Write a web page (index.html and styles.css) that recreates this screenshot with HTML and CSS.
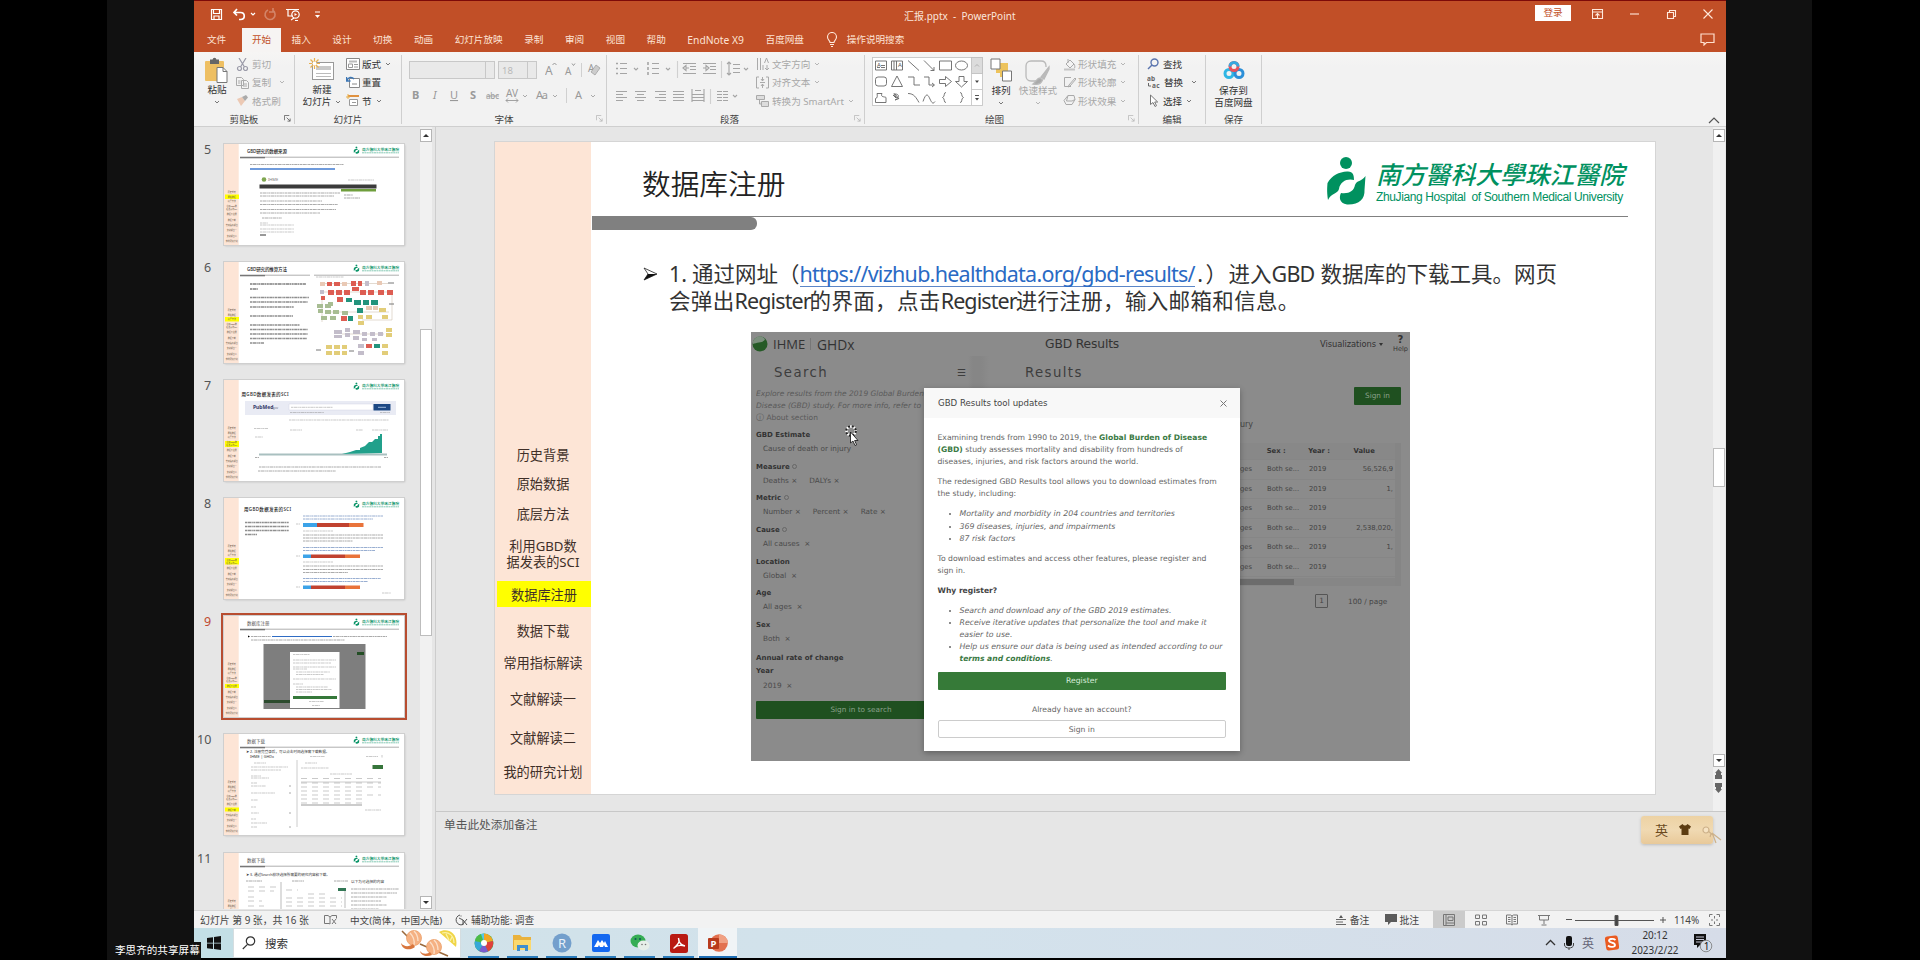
FILE: index.html
```html
<!DOCTYPE html>
<html>
<head>
<meta charset="utf-8">
<title>汇报.pptx - PowerPoint</title>
<link rel="stylesheet" href="styles.css">
</head>
<body>
<svg class="defs" width="0" height="0">
  <defs>
    <symbol id="chev" viewBox="0 0 6 6"><path d="M1 2l2 2 2-2" fill="none" stroke="currentColor" stroke-width="1"/></symbol>
    <symbol id="launch" viewBox="0 0 8 8"><path d="M.5 6V.5H6M3 3l4 4M7 4v3H4" fill="none" stroke="currentColor" stroke-width="1"/></symbol>
    <symbol id="logo" viewBox="0 0 39 48"><circle cx="19" cy="6" r="6"/><path d="M1 43C0 36 0 32 .5 26 5 18 12 15 20 14.500c6-.5 7 3.500 7 8.500-6-2-14 1-15 9-1 5-8 4-11 11z"/><path d="M38.500 19C34 25 30 23 28 28c-1 6-6 9-14 8-2 4-2 10 6 11.500 12 .5 18-5.500 17.500-14.500z"/></symbol>
    <symbol id="base" viewBox="0 0 180 101">
      <rect width="180" height="101" fill="#fff"/><rect width="14.7" height="101" fill="#fde5d6"/>
      <g fill="#0a9468"><use href="#logo" x="129.5" y="2.2" width="6" height="8"/><text x="138" y="7" class="t-logo" textLength="37">南方醫科大學珠江醫院</text><path d="M138 8.8h37" stroke="#0a9468" stroke-width=".7" stroke-dasharray="2 .4" opacity=".7"/></g>
    </symbol>
    <symbol id="rule" viewBox="0 0 180 101"><path d="M16 13.2h159" stroke="#777" stroke-width=".6"/><path d="M16 13.6h25" stroke="#777" stroke-width="1.4"/></symbol>
    <symbol id="labels" viewBox="0 0 180 101"><g class="t-lab" text-anchor="middle"><text x="7.7" y="49">历史背景</text><text x="7.7" y="53.5">原始数据</text><text x="7.7" y="58">底层方法</text><text x="7.7" y="63.3">利用GBD数</text><text x="7.7" y="66">据发表的SCI</text><text x="7.7" y="71.2">数据库注册</text><text x="7.7" y="76.8">数据下载</text><text x="7.7" y="81.7">常用指标解读</text><text x="7.7" y="87.3">文献解读一</text><text x="7.7" y="93.3">文献解读二</text><text x="7.7" y="98.4">我的研究计划</text></g></symbol>
  </defs>
</svg>

<div class="stage">
  <div class="side left"><span class="share">李思齐的共享屏幕</span></div>
  <div class="window">

    <header class="titlebar">
      <svg class="qat" width="130" height="20" viewBox="0 0 130 20" fill="none" stroke="#fff" stroke-width="1.2">
        <path d="M2.500 3.500h10v10h-10zM4.500 3.500v4h6v-4M5 13.500v-3.500h5v3.500"/>
        <path d="M28 3l-3 3.500 3 3M25.500 6.500h6c5 0 5 7 0 7h-1.500" stroke-width="1.700"/>
        <path d="M42 7l2 2 2-2"/>
        <g opacity=".3"><path d="M64 4.500a5 5 0 1 1-5-.5M64 2v4h-4" stroke-width="1.600"/></g>
        <path d="M77 3.500h13M79 4v6h5M82 14l3-2M86 14.500h3M82 4v-1"/><circle cx="86.500" cy="8.500" r="3.700"/><path d="M85.500 7v3l2.500-1.500z" fill="#fff" stroke="none"/>
        <path d="M106 6h5" stroke-width="1"/><path d="M106 9h5l-2.500 3z" fill="#fff" stroke="none"/>
      </svg>
      <span class="doc">汇报.pptx&nbsp; -&nbsp; PowerPoint</span>
      <span class="login">登录</span>
      <svg class="winbtns" width="124" height="16" viewBox="0 0 124 16" fill="none" stroke="#ffe9dc" stroke-width="1.100">
        <path d="M.5 3.500h10v9H.5zM.5 6h10M5.500 12V7.500M3.500 9.500l2-2 2 2"/><path d="M38 8h9"/><path d="M75.500 6.500h6v6h-6zM77.500 6V4.500h6v6H82"/><path d="M111.500 3.500l9 9M120.500 3.500l-9 9"/>
      </svg>
    </header>

    <nav class="tabs">
      <span class="tab file">文件</span><span class="tab on">开始</span><span class="tab">插入</span><span class="tab">设计</span><span class="tab">切换</span><span class="tab">动画</span><span class="tab">幻灯片放映</span><span class="tab">录制</span><span class="tab">审阅</span><span class="tab">视图</span><span class="tab">帮助</span><span class="tab lat">EndNote X9</span><span class="tab">百度网盘</span>
      <svg class="bulb" width="12" height="16" viewBox="0 0 12 16" fill="none" stroke="#ffe9dc" stroke-width="1.100"><path d="M4 10.500C4 8.500 1.500 8 1.500 5a4.300 4.300 0 0 1 9 0c0 3-2.500 3.500-2.500 5.500zM4 12.500h4M5 14.500h2"/></svg>
      <span class="tell">操作说明搜索</span>
      <svg class="comment" width="15" height="13" viewBox="0 0 15 13" fill="none" stroke="#ffe0cf" stroke-width="1.200"><path d="M1 1h13v8.500H6.500L4 12V9.500H1z"/></svg>
    </nav>

    <section class="ribbon">
      <div class="group g1">
        <div class="body">
          <div class="big paste">
            <svg width="26" height="27" viewBox="0 0 26 27"><rect x="1" y="4" width="19" height="20" rx="1" fill="#eebf62"/><rect x="6" y="2.500" width="9" height="4.500" fill="#666"/><circle cx="10.500" cy="2.500" r="1.800" fill="#666"/><path d="M13 10.500h6l4 4v11H13z" fill="#fff" stroke="#777"/><path d="M19 10.500v4h4" fill="none" stroke="#777"/></svg>
            <span>粘贴</span><svg class="cv"><use href="#chev"/></svg>
          </div>
          <div class="rows dim">
            <div><svg width="13" height="13" viewBox="0 0 13 13" fill="none" stroke="#9a9aa8" stroke-width="1.200"><path d="M3 0l5.500 9M10 0L4.500 9"/><circle cx="3.500" cy="10.500" r="2"/><circle cx="9.500" cy="10.500" r="2"/></svg>剪切</div>
            <div><svg width="13" height="13" viewBox="0 0 13 13" fill="#f3f3f3" stroke="#aaa"><path d="M.5 1.500h5l2 2v6h-7zM5.500 4.500h5l2 2v6h-7zM2 5h2.500M2 7h2.500M7 8h4M7 10h4"/></svg>复制<svg class="cv far"><use href="#chev"/></svg></div>
            <div><svg width="13" height="13" viewBox="0 0 13 13"><path d="M1 5l5-2 3 4-4 5z" fill="#ecc9b4"/><path d="M6 3l3 4 3-3.500L10 1z" fill="#aaa"/></svg>格式刷</div>
          </div>
        </div>
        <div class="cap">剪贴板<svg class="la dark"><use href="#launch"/></svg></div>
      </div>
      <div class="group g2">
        <div class="body">
          <div class="big newslide">
            <svg width="26" height="26" viewBox="0 0 26 26"><rect x="3.500" y="4.500" width="21" height="17" fill="#fff" stroke="#999"/><path d="M7 8h15v4H7z" fill="#c9c9c9"/><path d="M7 15.500h15M7 18.500h15" stroke="#bbb"/><path d="M5.500 0v11M0 5.500h11M1.500 1.500l8 8M9.500 1.500l-8 8" stroke="#e8b04f" stroke-width="1.200"/><circle cx="5.500" cy="5.500" r="2" fill="#fff"/></svg>
            <span>新建</span><span class="l2">幻灯片<svg class="cv"><use href="#chev"/></svg></span>
          </div>
          <div class="rows">
            <div><svg width="14" height="12" viewBox="0 0 14 12" fill="#fff" stroke="#888"><path d="M.5.5h13v11H.5z"/><path d="M3 3.500h8" stroke="#bbb" stroke-width="2"/><path d="M2.500 6h4v3.500h-4zM8 6.500h4M8 9h4" stroke="#999"/></svg>版式<svg class="cv"><use href="#chev"/></svg></div>
            <div><svg width="14" height="12" viewBox="0 0 14 12" fill="#fff" stroke="#888"><path d="M3.500 2.500h10v9h-10zM6 8h5"/><path d="M1 4.500C2 1 6 .5 8 3M.5 1v4h4" fill="none" stroke="#3d77b5" stroke-width="1.400"/></svg>重置</div>
            <div><svg width="14" height="13" viewBox="0 0 14 13" fill="#fff" stroke="#999"><path d="M3.500 5.500h8v6h-8zM6 8.500h4"/><path d="M2 2h11" stroke="#e0913f" stroke-width="2"/><path d="M2 0v5M0 3h4" stroke="#e8b04f"/></svg>节<svg class="cv"><use href="#chev"/></svg></div>
          </div>
        </div>
        <div class="cap">幻灯片</div>
      </div>
      <div class="group g3 dim">
        <div class="stack">
          <div class="line"><span class="box fbox"><i></i></span><span class="box sbox">18<i></i></span>
            <svg width="56" height="18" viewBox="0 0 56 18"><text x="0" y="14" class="ic" font-size="12">A</text><path d="M7.500 4l2-2 2 2" fill="none" stroke="#999"/><text x="20" y="14" class="ic" font-size="10">A</text><path d="M27 2.500l1.500 2L30 2.500" fill="none" stroke="#999"/><path d="M36.500 2v14" stroke="#d0d0d0"/><text x="43" y="11" class="ic" font-size="10">A</text><path d="M46 11l5-7 4 3-5 7z" fill="#ccc" stroke="#999" stroke-width=".7"/></svg>
          </div>
          <svg class="fmt" width="190" height="18" viewBox="0 0 190 18"><g class="ic" font-size="11"><text x="5" y="13" font-weight="700">B</text><text x="26" y="13" font-style="italic" class="it-i">I</text><text x="43" y="13" text-decoration="underline">U</text><text x="63" y="13" font-weight="700">S</text><text x="79" y="13" font-size="8" text-decoration="line-through" textLength="13">abc</text><text x="99" y="11" font-size="10" textLength="12">AV</text><text x="129" y="13" textLength="12">Aa</text><text x="168" y="13">A</text></g><path d="M99 14.500h12M101 12.500l-2 2 2 2M109 12.500l2 2-2 2" fill="none" stroke="#999" stroke-width=".9"/><path d="M116 9l2 2 2-2M146 9l2 2 2-2M184 9l2 2 2-2" fill="none" stroke="#aaa"/><path d="M159.500 2v15" stroke="#d0d0d0"/></svg>
        </div>
        <div class="cap">字体<svg class="la"><use href="#launch"/></svg></div>
      </div>
      <div class="group g4 dim">
        <div class="body">
          <svg class="para" width="136" height="48" viewBox="0 0 136 48" fill="none" stroke="#a5a5a5" stroke-width="1.100">
            <path d="M4 7.500h7M4 12.500h7M4 17.500h7M36 7.500h7M36 12.500h7M36 17.500h7"/><path d="M0 7.500h2M0 12.500h2M0 17.500h2M32 6v3M32 11v3M32 16v3" stroke-width="1.600"/>
            <path d="M18 12l2 2 2-2M50 12l2 2 2-2M128 12l2 2 2-2"/><path d="M61.500 5v17M105.500 5v17M94.500 33v15" stroke="#d0d0d0"/>
            <path d="M67 7.500h13M74 10.500h6M74 13.500h6M67 17.500h13M67 12l3-2.500v5zM70 12h3M87 7.500h13M94 10.500h6M94 13.500h6M87 17.500h13M93 12l-3-2.500v5zM87 12h3"/>
            <path d="M113 6v13M111 8l2-2 2 2M111 17l2 2 2-2M117 8.500h7M117 12.500h7M117 16.500h7"/>
            <path d="M0 35.500h11M0 38.500h7M0 41.500h11M0 44.500h7M19 35.500h11M21 38.500h7M19 41.500h11M21 44.500h7M39 35.500h11M43 38.500h7M39 41.500h11M43 44.500h7M57 35.500h11M57 38.500h11M57 41.500h11M57 44.500h11M76 38.500h12M76 41.500h12M76 44.500h12M76 33v13M88 33v13M79 34.500h6M101 35.500h5M107 35.500h5M101 38.500h5M107 38.500h5M101 41.500h5M107 41.500h5M101 44.500h5M107 44.500h5M117 39l2 2 2-2"/>
          </svg>
          <div class="rows wide">
            <div><svg width="13" height="14" viewBox="0 0 13 14" fill="none" stroke="#aaa"><path d="M1.500 1v12M4.500 1v12M11 8v5M9 11l2 2 2-2M8.500 6l2-5 2 5M7 13V8"/></svg>文字方向<svg class="cv"><use href="#chev"/></svg></div>
            <div><svg width="13" height="13" viewBox="0 0 13 13" fill="none" stroke="#aaa"><path d="M3 1H.5v11H3M10 1h2.500v11H10M4 6.500h5M6.500 1v4M5 3l1.500 2L8 3M6.500 12V8M5 10l1.500-2L8 10"/></svg>对齐文本<svg class="cv"><use href="#chev"/></svg></div>
            <div><svg width="13" height="13" viewBox="0 0 13 13" fill="#ddd" stroke="#aaa"><path d="M.5 1.500h8v4h-8zM5.500 7.500h7v5h-7zM3.500 6v4h2"/></svg>转换为 SmartArt<svg class="cv"><use href="#chev"/></svg></div>
          </div>
        </div>
        <div class="cap">段落<svg class="la"><use href="#launch"/></svg></div>
      </div>
      <div class="group g5">
        <div class="body">
          <svg class="shapes" width="111" height="49" viewBox="0 0 111 49" fill="none" stroke="#666" stroke-width=".9">
            <rect x=".5" y=".5" width="110" height="48" fill="#fff" stroke="#c6c6c6"/><rect x="99.500" y=".5" width="11" height="16" fill="#dcdcdc" stroke="#c0c0c0"/><path d="M99.500 17v31M99.500 32.500h11" stroke="#c6c6c6"/>
            <path d="M103 9.500l2-2 2 2" stroke="#aaa"/><path d="M103 23.500h4l-2 2.500zM103 41h4l-2 2.500z" fill="#444" stroke="none"/><path d="M103 38.500h4" stroke="#444"/>
            <path d="M3.500 4h11v9h-11zM9 8.500h4M9 10.500h4M5 10.500h3M19.500 4h11v9h-11zM22 4v9M24.500 4v9M36 3.500l11 10M52 3.500l10 10M62 10v3.500h-3.500M67.500 4h12v9h-12z"/><text x="5" y="9.500" font-size="6" fill="#555" stroke="none">A</text><text x="26" y="10" font-size="6" fill="#555" stroke="none">A</text><ellipse cx="89.500" cy="8.500" rx="6" ry="4.500"/>
            <rect x="3.500" y="20" width="11" height="9" rx="2.500"/><path d="M25 19l5.500 10.500h-11zM36 20h6v8h6M52 20h5v8h5M60 26l2.500 2-2.500 2M67.500 22.500h6V19.500l6 5-6 5v-3h-6zM87 19.500h5v5h3.500l-6 5.500-6-5.500H87z"/>
            <path d="M5 36.500h5c-2 4 3 3 4 4v5H3.500v-4c2 0 2-3 1.500-5zM22 36l2 5-3-3 6 4-4-5c5 0 4 4 0 6l3-1M36 36.500c6 0 8 4 11 9M51 44.500c6-18 7 8 12 0M74 35.500c-3 0-.5 4-3.500 5 3 1 .5 5 3.500 5M88 35.500c3 0 .5 4 3.500 5-3 1-.5 5-3.500 5"/>
          </svg>
          <div class="big arrange"><svg width="23" height="24" viewBox="0 0 23 24"><path d="M6 5h12v14H6z" fill="#edc35c"/><path d="M1 1h9v10H1zM12.500 13h9v10h-9z" fill="#fff" stroke="#777"/><path d="M4 15h6v5H4z" fill="#f3f3f3"/></svg><span>排列</span><svg class="cv"><use href="#chev"/></svg></div>
          <div class="big quick dim"><svg width="26" height="26" viewBox="0 0 26 26" fill="none" stroke="#b9b9b9" stroke-width="1.300"><path d="M12 21H6c-3 0-5-2-5-5V6c0-3 2-5 5-5h10c3 0 5 2 5 5v1"/><path d="M24 7l-8 10 3 2 5-10z" fill="#bbb"/><path d="M15 18c-3 0-4 4-7 6 4 1 8 0 9.500-4z" fill="#aaa"/></svg><span>快速样式</span><svg class="cv"><use href="#chev"/></svg></div>
          <div class="rows dim">
            <div><svg width="13" height="13" viewBox="0 0 13 13" fill="none" stroke="#aaa"><path d="M3 6l4-4 4 4-4 4zM5 5V1M11 6c1 2 1 3 .5 4"/><path d="M1 11.500h11" stroke-width="2" stroke="#c5c5c5"/></svg>形状填充<svg class="cv"><use href="#chev"/></svg></div>
            <div><svg width="13" height="13" viewBox="0 0 13 13" fill="none" stroke="#aaa"><path d="M8 1.500H1.500v9H8M12 2L6 9l-1 2 2-1 6-7z"/></svg>形状轮廓<svg class="cv"><use href="#chev"/></svg></div>
            <div><svg width="13" height="13" viewBox="0 0 13 13" fill="none" stroke="#aaa"><path d="M5 1.500h6l1 4-3 5H3l-2-4z"/><path d="M5 1.500L3.500 7H9l3-1.500" /></svg>形状效果<svg class="cv"><use href="#chev"/></svg></div>
          </div>
        </div>
        <div class="cap">绘图<svg class="la"><use href="#launch"/></svg></div>
      </div>
      <div class="group g6">
        <div class="body"><div class="rows">
          <div><svg width="13" height="12" viewBox="0 0 13 12" fill="none" stroke="#5a74ae" stroke-width="1.400"><circle cx="7.500" cy="4.500" r="3.500"/><path d="M5 7l-4 4"/></svg>查找</div>
          <div><svg width="14" height="16" viewBox="0 0 14 16"><g font-size="6.500" fill="#666" font-weight="700"><text x="0" y="7" textLength="8">ab</text><text x="5" y="13.500" textLength="7.500">ac</text></g><path d="M1.500 9v3h2.500" fill="none" stroke="#666"/></svg>替换<svg class="cv far6"><use href="#chev"/></svg></div>
          <div><svg width="13" height="13" viewBox="0 0 13 13" fill="#fff" stroke="#777"><path d="M3.500 1v9.500l2.500-2 2 4 1.500-.8-1.800-3.700h3z"/></svg>选择<svg class="cv"><use href="#chev"/></svg></div>
        </div></div>
        <div class="cap">编辑</div>
      </div>
      <div class="group g7">
        <div class="body"><div class="big save"><svg width="22" height="20" viewBox="0 0 22 20" fill="none" stroke-width="3"><circle cx="6" cy="13.500" r="4" stroke="#2fb6e4"/><circle cx="16" cy="13.500" r="4" stroke="#2b8fd8"/><circle cx="11" cy="6.500" r="4" stroke="#e8525c"/><path d="M7 6.500a4 4 0 0 1 8 0" stroke="#35a9e0"/></svg><span>保存到</span><span class="l2">百度网盘</span></div></div>
        <div class="cap">保存</div>
      </div>
      <svg class="collapse" width="12" height="8" viewBox="0 0 12 8" fill="none" stroke="#555" stroke-width="1.200"><path d="M1 7l5-5 5 5"/></svg>
    </section>

    <main class="work">
      <aside class="thumbs">
        <div class="trow"><b>5</b><svg class="thumb" viewBox="0 0 180 101"><use href="#base"/><use href="#rule"/><rect x="1" y="50.500" width="14" height="4.500" fill="#ff0"/><use href="#labels"/>
          <text x="23" y="8.700" class="t-h" textLength="40">GBD研究的数据来源</text><path d="M26 20.500h94" class="tx"/><path d="M26 25h85" stroke="#3f7ad0" stroke-width="1.600"/>
          <circle cx="40" cy="35.500" r="2.300" fill="#7fa650"/><text x="44" y="37" font-size="4" fill="#777">IHME</text><path d="M124 36h26" class="tx l"/><path d="M35.500 40.500h117v4h-117z" fill="#3b3b3b"/><path d="M117 45h35v2.500h-35z" fill="#6f9e3c"/>
          <path d="M36 49h80M36 52h74M36 57h62M36 60.500h78M36 65.500h76M36 69h60M38 74h20M120 51h9M120 54h16" class="tx"/><path d="M36 79h8M36 81h34M36 85h34M36 88h34" class="tx l"/><path d="M36 91h6" stroke="#333"/></svg></div>
        <div class="trow"><b>6</b><svg class="thumb" viewBox="0 0 180 101"><use href="#base"/><use href="#rule"/><path d="M86 12h4v3h-4z" fill="#fff"/><rect x="1" y="55" width="14" height="4.500" fill="#ff0"/><use href="#labels"/>
          <text x="23" y="8.700" class="t-h" textLength="40">GBD研究的推算方法</text>
          <path d="M26 22h56M26 27h8" class="tx k"/><path d="M26 35.500h59M26 40h58M26 45h44M26 54h43M26 63h50M26 67.500h58M26 72h58M26 76.500h57M26 81h14" class="tx k l"/>
          <path d="M92 15h28" class="tx l"/><path d="M96 21.500h68M100 30h68v28h-30M98 36v24M105 50h60M118 72h42" stroke="#c7b5a0" stroke-width=".5" fill="none"/>
          <path d="M96 20h5v4h-5zM118 20h5v4h-5zM153 19h5v4h-5zM142 44h6v4h-6zM149 44h5v4h-5z" fill="#e9c9b5"/><path d="M103 20h5v4h-5zM110 20h6v4h-6zM127 19h5v5h-5zM134 19h4v5h-4zM104 28h6v5h-6zM112 28h6v5h-6zM120 28h6v5h-6zM128 25h7v4h-7zM136 28h6v5h-6zM144 28h6v5h-6zM154 28h6v5h-6zM163 28h6v5h-6zM97 34h4v4h-4zM113 35h6v5h-6zM117 54h6v5h-6zM142 82h6v4h-6z" fill="#dd5d52"/><path d="M122 36h6v4h-6zM130 38h7v5h-7zM139 38h6v5h-6zM147 38h7v5h-7zM133 46h6v5h-6zM124 54h5v5h-5zM150 82h6v4h-6z" fill="#23937c"/><path d="M93 42h6v4h-6zM101 42h6v4h-6zM94 47h5v4h-5zM101 48h6v4h-6zM109 48h6v4h-6zM118 49h6v4h-6zM97 54h6v4h-6zM106 54h6v4h-6zM104 40h5v4h-5z" fill="#a8bd93"/><path d="M134 53h5v4h-5zM142 53h6v4h-6zM155 46h7v4h-7zM158 53h6v4h-6zM134 59h6v4h-6zM162 66h6v4h-6zM162 71h6v4h-6zM102 83h6v4h-6zM110 83h6v4h-6zM118 83h5v4h-5zM102 89h6v4h-6zM110 89h6v4h-6zM118 89h5v4h-5zM158 82h6v4h-6zM158 89h6v4h-6z" fill="#e2cd79"/><path d="M110 68h8v4h-8zM110 73h8v3h-8zM121 66h5v4h-5zM121 71h5v4h-5zM129 68h7v4h-7zM129 74h6v4h-6zM138 70h5v4h-5zM146 70h5v4h-5zM154 70h5v4h-5zM138 76h5v3h-5zM148 76h5v3h-5zM96 28h4v4h-4zM141 19h4v5h-4zM134 82h6v4h-6zM134 89h6v4h-6z" fill="#c3bdca"/><path d="M92 88h5M164 21h6M165 42h5M125 89h5" stroke="#777"/></svg></div>
        <div class="trow"><b>7</b><svg class="thumb" viewBox="0 0 180 101"><use href="#base"/><rect x="1" y="61" width="14" height="6" fill="#ff0"/><use href="#labels"/>
          <text x="17.500" y="15.500" class="t-h" textLength="47">用GBD数据发表的SCI</text><path d="M21 21h151v14H21z" fill="#e9ebf4"/><text x="29" y="29" font-size="5" font-weight="700" fill="#333a66">PubMed</text><text x="48" y="29" font-size="3" fill="#667">.gov</text><path d="M65 24h84v6H65z" fill="#fff" stroke="#ccd" stroke-width=".4"/><path d="M149.500 24h17v6.500h-17z" fill="#1c4884"/><path d="M154 27.300h8" stroke="#9db8dc"/><path d="M67 27.300h42M66 32.500h34M156 32.500h10" class="tx l"/><path d="M65 40h100M30 48.500h14M66 50h12M132 50h7M148 50h16" class="tx l" stroke-dasharray="4 3"/><path d="M31 57h8" class="tx l"/>
          <path d="M35 74.500h128" stroke="#a9c0c0" stroke-width="2"/><path d="M118 74l8-2 6-2h4v-2l5-2 4-4h3l3-3h3v-3h2v-2h2v19z" fill="#21a08b"/><path d="M31 77.500h4M160 77.500h4" class="tx"/><path d="M35 87h122M34 91h78" class="tx"/></svg></div>
        <div class="trow"><b>8</b><svg class="thumb" viewBox="0 0 180 101"><use href="#base"/><rect x="1" y="60" width="14" height="6.500" fill="#ff0"/><use href="#labels"/>
          <text x="20" y="12.500" class="t-h" textLength="47">用GBD数据发表的SCI</text><path d="M21 24.500h44M21 28.500h44M21 32.500h44M21 36.500h12" class="tx k l"/>
          <path d="M79 18h80M79 21h70M79 49.500h80M79 52.500h72M79 80.500h78M79 83.500h65" class="tx b"/><path d="M79 37h80M79 40h80M79 43h50M79 68h80M79 71.500h80M79 74.500h45" class="tx"/>
          <path d="M79 25h14v4H79zM79 56.500h8v3.500h-8zM79 87.500h8v3.500h-8z" fill="#3ca3e8"/><path d="M93 25h32v4H93zM87 56.500h34v3.500H87zM87 87.500h34v3.500H87z" fill="#c1422f"/><path d="M125 25h14.500v4H125zM121 56.500h15v3.500h-15zM121 87.500h15v3.500h-15z" fill="#e9733a"/><path d="M79 33h30M79 64h30M72 26h4M72 58h4M72 89h4M158 95h9" class="tx l"/></svg></div>
        <div class="trow sel"><b>9</b><svg class="thumb" viewBox="0 0 180 101"><use href="#base"/><use href="#rule"/><rect x="1" y="68" width="14" height="4" fill="#ff0"/><use href="#labels"/>
          <text x="23" y="8.700" class="t-h n">数据库注册</text><path d="M27 20.500h20M109 20.500h54M27 24h94" class="tx"/><path d="M48 20.500h60" stroke="#2f6cc4" stroke-width="1"/><path d="M24 19.500l2 1-2 1z"/>
          <path d="M39.500 28h102v65h-102z" fill="#7e7e7e"/><path d="M40 84h27v3H40z" fill="#2b4a2d"/><path d="M133 36h7v3h-7z" fill="#234e25"/><path d="M66 36h49.500v56H66z" fill="#fff"/><path d="M69 38.500h17M69 44h43M69 47h38M69 51h43M69 53h14M72 56h34M72 58.500h28M69 63h43M69 68h10M72 71h32M72 73.500h36M72 76h16M85 85.500h15M88 89.500h8" class="tx l"/><path d="M69 80h44v3H69z" fill="#35783a"/></svg></div>
        <div class="trow"><b>10</b><svg class="thumb" viewBox="0 0 180 101"><use href="#base"/><use href="#rule"/><rect x="1" y="73.500" width="14" height="4" fill="#ff0"/><use href="#labels"/>
          <text x="23" y="8.700" class="t-h n">数据下载</text><text x="22" y="18.500" font-size="3.600" fill="#333">➤ 2. 注册完登录后，可以点击时间选择需下载数据。</text><text x="26" y="24" font-size="3.800" fill="#333">IHME | GHDx</text><path d="M86 22.500h15M142 22.500h12M158 21v3" class="tx l"/><path d="M73 26v67M77 48h80" stroke="#ccc"/>
          <path d="M30 29h12M27 33h37M27 36h30M27 42h10M27 44h18M27 49h6M27 52h15M27 59h24M27 66h7M27 73h5M27 79h8M27 85h5M27 89h16M27 93h6M77 34h28M81 29h12M106 40h22" class="tx l"/><path d="M148.500 31h10.500v4h-10.500z" fill="#36753b"/><path d="M77 44.500h80M77 49h80M77 53h80M77 57h66M77 61h80M77 65h66M77 69h66" class="tx l g"/><path d="M77 71h61" stroke="#999" stroke-width="1"/><path d="M141 76h16" class="tx l"/><path d="M65 52h2M65 59h2M65 79h2M65 93h2" class="tx"/></svg></div>
        <div class="trow"><b>11</b><svg class="thumb" viewBox="0 0 180 101"><use href="#base"/><use href="#rule"/><use href="#labels"/>
          <text x="23" y="8.700" class="t-h n">数据下载</text><text x="22" y="22.500" font-size="3.600" fill="#333">➤ 3. 通过Search模块选择所需要的研究内容和下载。</text><path d="M22 28h16M68 28h12M110 28h14" class="tx"/><text x="127" y="30" font-size="3.700" fill="#333">以下为可选择的内容</text><path d="M57 29v29M121 35v20" stroke="#bbb"/><path d="M24 34h28M24 38h26M24 44h10M24 48h14M24 53h16M62 37h12M84 41h20M62 45h56M62 49h56M62 53h56M62 57h56" class="tx l g"/><path d="M114 35h8v3h-8z" fill="#375"/><path d="M127 36h48M127 40h46M127 44h36M127 48h30M127 52h36M127 56h28" class="tx"/></svg></div>
      </aside>
      <div class="scroll sleft"><i class="up"></i><i class="grip"></i><i class="down"></i></div>
      <div class="center">
        <div class="canvas">
          <article class="slide">
            <ul class="strip">
              <li>历史背景</li><li>原始数据</li><li>底层方法</li><li class="two">利用GBD数<br>据发表的SCI</li><li class="hl">数据库注册</li><li>数据下载</li><li>常用指标解读</li><li>文献解读一</li><li>文献解读二</li><li>我的研究计划</li>
            </ul>
            <div class="content">
              <div class="head">
                <h1>数据库注册</h1>
                <div class="brand"><svg width="39" height="48" fill="#00915f"><use href="#logo"/></svg><div><p class="cal">南方醫科大學珠江醫院</p><p class="eng">ZhuJiang Hospital&nbsp; of Southern Medical University</p></div></div>
              </div>
              <div class="bar"><i></i></div>
              <div class="text">
                <svg width="16" height="16" viewBox="0 0 16 16"><path d="M2 2l13 6-13 6 4-6z" fill="#fff" stroke="#222" stroke-width=".8"/><path d="M6 8h9L2 14z" fill="#111"/></svg>
                <div class="lines">
                  <p><span class="n1">1.</span><span>通过网址（</span><a>https://vizhub.healthdata.org/gbd-results/</a><span class="dot">.</span><span class="par">）</span><span>进入</span><span class="gbd">GBD</span><span>数据库的下载工具。网页</span></p>
                  <p class="p2"><span>会弹出</span><span class="reg">Register</span><span>的界面，点击</span><span class="reg">Register</span><span>进行注册，输入邮箱和信息。</span></p>
                </div>
              </div>
              <div class="shot">
                <div class="shot-top"><svg width="16" height="16" viewBox="0 0 16 16"><circle cx="8" cy="8" r="7.500" fill="#255a26"/><path d="M1 5C4-1 10-1 13 3c-1 4-8 3-12 5-.5-1 0-2 0-3z" fill="#7b8f7d"/></svg><span class="ihme">IHME</span><span class="ghdx">GHDx</span><span class="gr">GBD Results</span><span class="viz">Visualizations</span><i class="caret"></i><span class="help"><b>?</b>Help</span></div>
                <div class="shot-sub"><span class="s1">Search</span><span class="ham">☰</span><span class="s2">Results</span></div>
                <div class="shot-main">
                  <div class="form">
                    <p class="it w1">Explore results from the 2019 Global Burden</p><p class="it w2">Disease (GBD) study. For more info, refer to</p><p class="it w3">ⓘ About section</p>
                    <b class="f0">GBD Estimate</b><p class="v">Cause of death or injury</p>
                    <b>Measure <u></u></b><p class="v"><span>Deaths ×</span><span>DALYs ×</span></p>
                    <b>Metric <u></u></b><p class="v"><span>Number ×</span><span>Percent ×</span><span>Rate ×</span></p>
                    <b>Cause <u></u></b><p class="v">All causes&nbsp; ×</p>
                    <b>Location</b><p class="v">Global&nbsp; ×</p>
                    <b>Age</b><p class="v">All ages&nbsp; ×</p>
                    <b>Sex</b><p class="v">Both&nbsp; ×</p>
                    <b class="tight">Annual rate of change</b><b class="tight yr">Year</b><p class="v">2019&nbsp; ×</p>
                    <div class="sbtn">Sign in to search</div>
                  </div>
                  <div class="results">
                    <div class="sg">Sign in</div>
                    <p class="ury">ury</p>
                    <div class="tbl">
                      <div class="tr th"><span></span><span>Sex :</span><span>Year :</span><span>Value</span></div>
                      <div class="tr"><span>ges</span><span>Both se...</span><span>2019</span><span class="r">56,526,9</span></div>
                      <div class="tr"><span>ges</span><span>Both se...</span><span>2019</span><span class="r">1,</span></div>
                      <div class="tr"><span>ges</span><span>Both se...</span><span>2019</span><span class="r"></span></div>
                      <div class="tr"><span>ges</span><span>Both se...</span><span>2019</span><span class="r">2,538,020,</span></div>
                      <div class="tr"><span>ges</span><span>Both se...</span><span>2019</span><span class="r">1,</span></div>
                      <div class="tr"><span>ges</span><span>Both se...</span><span>2019</span><span class="r"></span></div>
                      <div class="hs"><i></i></div>
                    </div>
                    <div class="pg"><span class="one">1</span><span>100 / page</span></div>
                  </div>
                </div>
                <div class="modal">
                  <div class="mh"><span>GBD Results tool updates</span><svg width="7" height="7" viewBox="0 0 7 7" stroke="#777" stroke-width="1"><path d="M.5.500l6 6M6.500.500l-6 6"/></svg></div>
                  <div class="mb">
                    <p>Examining trends from 1990 to 2019, the <b class="g">Global Burden of Disease</b><br><b class="g">(GBD)</b> study assesses mortality and disability from hundreds of<br>diseases, injuries, and risk factors around the world.</p>
                    <p>The redesigned GBD Results tool allows you to download estimates from<br>the study, including:</p>
                    <ul><li>Mortality and morbidity in 204 countries and territories</li><li>369 diseases, injuries, and impairments</li><li>87 risk factors</li></ul>
                    <p>To download estimates and access other features, please register and<br>sign in.</p>
                    <p><b>Why register?</b></p>
                    <ul><li>Search and download any of the GBD 2019 estimates.</li><li>Receive iterative updates that personalize the tool and make it<br>easier to use.</li><li>Help us ensure our data is being used as intended according to our<br><b class="g">terms and conditions</b>.</li></ul>
                    <div class="rbtn">Register</div>
                    <p class="acc">Already have an account?</p>
                    <div class="ibtn">Sign in</div>
                  </div>
                </div>
                <svg class="cursor" width="16" height="22" viewBox="0 0 16 22"><circle cx="7" cy="6" r="4.500" fill="none" stroke="#fff" stroke-width="2.500"/><circle cx="7" cy="6" r="4.800" fill="none" stroke="#222" stroke-width="2.200" stroke-dasharray="2 1.800"/><path d="M6.500 7v11l2.500-2 2 4.500 1.600-.7-2-4.300H14z" fill="#fff" stroke="#111" stroke-width=".8"/></svg>
              </div>
            </div>
          </article>
          <div class="scroll sright"><i class="up"></i><i class="grip"></i><i class="down"></i>
            <svg width="11" height="26" viewBox="0 0 11 26" fill="#666"><path d="M5.500 1L9 5H8v2h1v4H2V7h1V5H2zM5.500 25L9 21H8v-2h1v-4H2v4h1v2H2z"/></svg></div>
        </div>
        <div class="notes">单击此处添加备注
          <div class="ime"><span>英</span><svg width="12" height="12" viewBox="0 0 12 12" fill="#5d3d12"><path d="M3.500 0Q6 3 8.500 0L12 2.500 10.500 5 9.500 4.500V11h-7V4.500L1.500 5 0 2.500z"/></svg><svg class="knot" width="20" height="18" viewBox="0 0 20 18" fill="none" stroke="#cdb189" stroke-width="1.200"><circle cx="4" cy="4" r="3" fill="#f6e3c3"/><path d="M6 5l5 4 3 8M10 7l9 7M9 8l-1 3"/></svg></div>
        </div>
      </div>
    </main>

    <footer class="status">
      <span class="st1">幻灯片 第 9 张，共 16 张</span>
      <svg class="book" width="13" height="10" viewBox="0 0 13 10" fill="none" stroke="#777"><path d="M6 9V2L4 .5H.5v8H5zM6 2l2-1.500h4.500v3M8 4l4 5M12 4L8 9"/></svg>
      <span class="st2">中文(简体，中国大陆)</span>
      <svg class="acc-i" width="13" height="12" viewBox="0 0 13 12" fill="none" stroke="#555"><path d="M5 1a5 5 0 1 0 3 9.500M4 4l4 2v5M6 1.500v1M8 6l4 5M12 5L7 11"/></svg>
      <span class="st3">辅助功能: 调查</span>
      <span class="grow"></span>
      <svg width="10" height="11" viewBox="0 0 10 11" fill="none" stroke="#666"><path d="M0 5.500h10M0 8h7M0 10.500h10"/><path d="M3 4h4L5 1z" fill="#555" stroke="none"/></svg><span class="s4">备注</span>
      <svg width="12" height="11" viewBox="0 0 12 11" fill="#5a5a5a"><path d="M0 0h12v8H6l-3 3V8H0z"/></svg><span class="s5">批注</span>
      <div class="views"><span class="von"><svg width="12" height="12" viewBox="0 0 12 12" fill="none" stroke="#777"><path d="M.5.500h11v11H.500zM3 1v10M5 3h5v3.500H5zM3 9h8"/></svg></span><span><svg width="12" height="12" viewBox="0 0 12 12" fill="none" stroke="#777"><path d="M.5 1h4v3.500h-4zM7.500 1h4v3.500h-4zM.5 7.500h4V11h-4zM7.500 7.500h4V11h-4z"/></svg></span><span><svg width="12" height="12" viewBox="0 0 12 12" fill="none" stroke="#777"><path d="M6 2v9M.5 1h4L6 2l1.500-1h4v9h-4L6 11l-1.500-1h-4zM2 3.500h2.500M2 5.500h2.500M2 7.500h2.500M7.500 3.500H10M7.500 5.500H10M7.500 7.500H10"/></svg></span><span><svg width="12" height="12" viewBox="0 0 12 12" fill="none" stroke="#777"><path d="M0 1.500h12M1.500 2v4h9V2M6 6v4M3.500 11h5"/></svg></span></div>
      <svg class="zoomer" width="102" height="12" viewBox="0 0 102 12" stroke="#555" fill="none"><path d="M0 5.500h6M94 6h6M97 3v6"/><path d="M9 6.500h79"/><path d="M49 1.500h3v10h-3z" fill="#444"/></svg>
      <span class="pct">114%</span>
      <svg width="11" height="12" viewBox="0 0 11 12" fill="none" stroke="#777"><path d="M.5 3V.500h3M7.500.500h3V3M.500 9v2.500h3M7.500 11.500h3V9M5.500 2v2.500M5.500 10V7.500M2 6h2M7 6h2"/></svg>
    </footer>

    <div class="taskbar">
      <span class="start"><svg width="14" height="14" viewBox="0 0 14 14" fill="#111"><path d="M0 2l6-.800v5.500H0zM7 1l7-1v6.700H7zM0 7.500h6V13l-6-.800zM7 7.500h7V14l-7-1z"/></svg></span>
      <div class="search"><svg width="14" height="14" viewBox="0 0 14 14" fill="none" stroke="#333" stroke-width="1.200"><circle cx="8.500" cy="5" r="4.200"/><path d="M5.500 8.300L.8 13"/></svg><span>搜索</span>
        <svg class="shrimp" width="60" height="28" viewBox="0 0 60 28"><path d="M2 2l12 12M20 15l28 12" stroke="#9b6a3c" stroke-width="1.500"/><g fill="#f5b183" stroke="#eb9f68" stroke-width=".8"><circle cx="14" cy="9" r="7.500"/><circle cx="34" cy="18" r="7.500"/></g><path d="M10 4c3 3 5 6 4 12M14 2c3 3 4 6 4 10M30 13c3 3 5 6 4 12M34 11c3 3 4 6 4 10" stroke="#fbe0c9" stroke-width="1.300" fill="none"/><path d="M1 14c3 4 8 4 12 1l2 3c-5 4-13 3-14-4zM20 22c3 4 8 3 10 1l2 3c-5 2-11 1-12-4z" fill="#d9763d"/><path d="M39 3c8-5 20 1 17 15z" fill="#f0d546"/><path d="M42 4c7-2 12 3 12 10M46 5l3 6M52 8l-2 4" fill="none" stroke="#fbf2a8" stroke-width="1.300"/></svg></div>
      <div class="apps">
        <span><svg width="20" height="20" viewBox="0 0 20 20"><circle cx="10" cy="10" r="9.500" fill="#3db44b"/><path d="M10 .5A9.500 9.500 0 0 1 19 8L10 10z" fill="#f2a724"/><path d="M10 .5A9.500 9.500 0 0 0 1 8l9 2z" fill="#56c6e8"/><path d="M1 8a9.500 9.500 0 0 0 4 10l5-8z" fill="#36a8d8"/><path d="M19 8a9.500 9.500 0 0 1-5 10.500L10 10z" fill="#e0403d"/><path d="M5 18a9.500 9.500 0 0 0 9 .5L10 10z" fill="#7a5bd0"/><path d="M1 8a9.500 9.500 0 0 1 6-7l3 9z" fill="#4dbb45"/><circle cx="10" cy="10" r="3" fill="#fff"/></svg></span>
        <span><svg width="19" height="18" viewBox="0 0 19 18"><path d="M0 1h7l2 2h9v13H0z" fill="#e9b23d"/><path d="M1 6h17v10H1z" fill="#fbd96e"/><path d="M4 11h11v6h-3v-3H7v3H4z" fill="#3f8fd0"/></svg></span>
        <span><svg width="20" height="20" viewBox="0 0 20 20"><circle cx="10" cy="10" r="9.500" fill="#739fcc"/><text x="6" y="14.500" font-size="13" fill="#e8f1fa">R</text></svg></span>
        <span><svg width="18" height="18" viewBox="0 0 18 18"><rect width="18" height="18" rx="2" fill="#1468f0"/><path d="M2 13l4-7 2 3 2-3 2 3 1-2 3 6h-3l-1-2-1 2H8l-1-2-1 2z" fill="#fff"/></svg></span>
        <span><svg width="20" height="18" viewBox="0 0 20 18"><ellipse cx="8" cy="7" rx="7.500" ry="6.500" fill="#35ad54"/><circle cx="5.500" cy="5" r="1" fill="#155"/><circle cx="10" cy="5" r="1" fill="#155"/><ellipse cx="13.500" cy="11.500" rx="6" ry="5" fill="#e6efe9"/><circle cx="12" cy="10.500" r=".8" fill="#777"/><circle cx="15.500" cy="10.500" r=".8" fill="#777"/></svg></span>
        <span><svg width="18" height="19" viewBox="0 0 18 19"><rect width="18" height="19" rx="2.500" fill="#b91a12"/><path d="M8.500 4c2 4-1 7-5 10.500M8.500 4c0 4 3 7 6.500 8M4 14c3-3 7-3 11-2" fill="none" stroke="#fff" stroke-width="1.400"/></svg></span>
        <span class="pp"><svg width="20" height="20" viewBox="0 0 20 20"><circle cx="11" cy="10" r="8.800" fill="#e2714f"/><path d="M11 1.200A8.800 8.800 0 0 1 19.800 10H11z" fill="#f0a184"/><rect y="5" width="11" height="11" rx="1" fill="#b83b1d"/><text x="2.500" y="14" font-size="9.500" font-weight="700" fill="#fff">P</text></svg></span>
      </div>
      <div class="tray">
        <svg width="62" height="18" viewBox="0 0 62 18"><path d="M1 11l4.500-4.500L10 11" fill="none" stroke="#333" stroke-width="1.300"/><rect x="21" y="2" width="6" height="10" rx="2" fill="#111"/><path d="M19.500 9v2c0 4 9 4 9 0V9M24 14v2" stroke="#444" fill="none"/><text x="37" y="14" font-size="12" fill="#667">英</text></svg>
        <svg class="sogou" width="14" height="16" viewBox="0 0 14 16"><rect x=".5" y="1" width="13" height="14" rx="2.500" fill="#ea5b22" transform="rotate(-8 7 8)"/><path d="M10.500 5C8 3 3.500 4 4 6s6 1.500 6 4-5 2.500-7 .5" fill="none" stroke="#fff" stroke-width="1.800"/></svg>
        <div class="clock"><span>20:12</span><span>2023/2/22</span></div>
        <svg width="20" height="20" viewBox="0 0 20 20"><path d="M1 1h12v11H7l-3 3v-3H1z" fill="#111"/><path d="M3 4h8M3 6.500h8M3 9h8" stroke="#dde" stroke-width=".9"/><circle cx="13" cy="13" r="5.800" fill="#d5dde8" stroke="#777" stroke-width=".8"/><text x="10.800" y="16.700" font-size="10" fill="#111">1</text></svg>
      </div>
    </div>
  </div>
  <div class="side right"></div>
</div>
</body>
</html>
```
FILE: styles.css
```css
* { box-sizing: border-box; }
body { margin: 0; width: 1920px; height: 960px; overflow: hidden; background: #000; font-family: "Noto Sans", "Noto Sans CJK SC", sans-serif; font-size: 9.6px; color: #333; }
p, h1, ul { margin: 0; padding: 0; font-weight: 400; }
ul { list-style: none; }
svg { flex: none; display: block; }
svg text { font-family: "Noto Sans", "Noto Sans CJK SC", sans-serif; }
.defs { position: absolute; }
.stage { display: flex; width: 1920px; height: 960px; padding: 0 108px 0 107px; }
.side { flex: none; width: 87px; background: #111; }
.side.right { width: 86px; }
.side.left { display: flex; align-items: flex-end; }
.share { position: relative; z-index: 2; margin-left: 6px; height: 18px; line-height: 17px; padding: 0 1px 0 2px; font-size: 10.6px; white-space: nowrap; color: #fff; background: #111; }
.window { flex: none; width: 1532px; height: 958px; display: flex; flex-direction: column; border-top: 1px solid #7d0a08; background: #e6e6e6; }

.titlebar { display: flex; align-items: center; height: 27px; background: #c14f27; color: #fff; }
.qat { margin: 3px 0 0 15px; }
.doc { margin: 2px 0 0 565px; width: 190px; font-size: 10px; white-space: nowrap; color: #fbe6dc; }
.login { margin-left: 441px; width: 36px; height: 16px; margin-bottom: 3px; background: #fff; color: #c14f27; text-align: center; line-height: 16px; }
.winbtns { margin: 0 0 2px 21px; }
.tabs { display: flex; height: 24px; background: #c14f27; color: #fde3d5; line-height: 24px; }
.tab { padding: 0 10.8px; white-space: nowrap; }
.tab.file { padding: 0 16px 0 13px; }
.tab.on { background: #f6f4f3; color: #c14f27; padding: 0 9.700px; }
.tab.lat { font-size: 10.300px; }
.bulb { margin: 4px 0 0 11px; }
.tell { margin-left: 9px; }
.comment { margin: 5px 11px 0 auto; }

.ribbon { display: flex; height: 75px; background: linear-gradient(#f6f5f4, #f2f2f2 20%); border-bottom: 1px solid #cfcfcf; }
.group { display: flex; flex-direction: column; justify-content: space-between; margin: 3px 0 2px; border-right: 1px solid #cfcfcf; }
.g1 { width: 101px; } .g2 { width: 107px; } .g3 { width: 205px; } .g4 { width: 258px; } .g5 { width: 274px; } .g6 { width: 67px; } .g7 { width: 56px; }
.body { display: flex; height: 56px; }
.cap { position: relative; height: 13px; line-height: 17px; text-align: center; color: #444; }
.la { position: absolute; right: 3px; top: 4px; width: 7px; height: 7px; color: #bbb; }
.la.dark { color: #666; }
.cv { width: 6px; height: 6px; color: #777; display: inline-block; }
.dim { color: #a8a8a8; }
.dim .cv { color: #b5b5b5; }
.big { display: flex; flex-direction: column; align-items: center; line-height: 12px; white-space: nowrap; }
.big .l2 { display: flex; align-items: center; gap: 4px; }
.paste { width: 24px; margin-left: 11px; padding-top: 2px; }
.paste .cv, .arrange .cv, .quick .cv { margin-top: 3px; }
.newslide { width: 40px; margin-left: 7px; padding-top: 3px; }
.rows { display: flex; flex-direction: column; margin-left: 7px; height: 55px; }
.rows > div { display: flex; align-items: center; gap: 3px; height: 18.300px; white-space: nowrap; }
.rows .cv { margin-left: 1px; }
.rows .cv.far { margin-left: 5px; }
.rows .cv.far6 { margin-left: 5px; }
.g2 .rows { margin-left: 4px; }
.g2 .rows > div { gap: 2px; }
.g2 .rows .cv { margin-left: 2px; }
.stack { padding: 6px 0 0 7px; }
.line { display: flex; gap: 3px; }
.line svg { margin-left: 5px; }
.box { height: 18px; border: 1px solid #c8c8c8; background: #e9e9e9; display: flex; justify-content: flex-end; font-size: 9.500px; line-height: 17px; }
.box i { width: 9px; margin-left: 1px; border-left: 1px solid #c8c8c8; }
.fbox { width: 86px; } .sbox { width: 39px; } .sbox { justify-content: space-between; padding-left: 3px; color: #b8b8b8; }
.fmt { margin: 7px 0 0 -2px; }
.ic { fill: #999; }
.para { margin: 1px 0 0 9px; }
.rows.wide { margin-left: 4px; }
.shapes { margin: 2px 0 0 7px; }
.arrange { width: 24px; margin-left: 6px; padding-top: 3px; }
.arrange svg:first-child { margin-bottom: 3px; }
.quick { width: 40px; margin-left: 5px; padding-top: 5px; }
.quick svg:first-child { margin-bottom: -1px; }
.g5 .rows { margin-left: 5px; }
.g5 .rows > div { gap: 2px; } .g5 .rows .cv { margin-left: 2px; }
.g6 .rows { margin-left: 8px; }
.save { width: 55px; padding-top: 5px; }
.save svg { margin-bottom: 5px; }
.g3 .cap, .g4 .cap { color: #444; }
.g4 .cap { padding-right: 12px; } .g5 .cap { padding-right: 14px; }
.collapse { margin: 64px 0 0 446px; }

.work { display: flex; flex: none; height: 783px; }
.thumbs { width: 226px; height: 782px; overflow: hidden; padding: 17px 0 0 9px; }
.trow { display: flex; height: 118.100px; }
.trow b { width: 21px; font-weight: 400; font-size: 12.500px; line-height: 12px; text-align: left; padding-left: 1px; color: #555; }
.trow:nth-child(n+6) b { margin-left: -7px; width: 28px; }
.thumb { width: 180px; height: 101px; box-shadow: 0 0 0 1px #cfcfcf, 1px 1px 2px #bbb; }
.trow.sel b { color: #c04a30; }
.trow.sel .thumb { outline: 2px solid #b84d30; outline-offset: 1px; }
.t-h { font-size: 4.500px; fill: #222; font-weight: 500; }
.t-h.n { font-weight: 400; fill: #555; }
.t-logo { font-size: 3.800px; font-weight: 500; }
.t-lab { font-size: 2px; fill: #654; }
.tx { stroke: #888; stroke-width: 1; stroke-dasharray: 2.200 .5 3.400 .4 1.300 .5; opacity: .7; fill: none; }
.tx.l { opacity: .45; }
.tx.k { stroke: #444; stroke-width: 1.400; }
.tx.k.l { opacity: .6; }
.tx.b { stroke: #6c8bbd; }
.tx.g { stroke-dasharray: 6 5; }

.scroll { display: flex; flex-direction: column; width: 12px; background: #f1f1f1; }
.scroll .up, .scroll .down { flex: none; height: 13px; border: 1px solid #b5b5b5; background: #fff; display: flex; align-items: center; justify-content: center; }
.scroll .up::before { content: ""; border: 3px solid transparent; border-top: 0; border-bottom: 3.500px solid #333; }
.scroll .down::before { content: ""; border: 3px solid transparent; border-bottom: 0; border-top: 3.500px solid #333; }
.scroll .grip { flex: none; background: #fff; border: 1px solid #bdbdbd; }
.sleft { padding-top: 2px; }
.sleft .grip { margin-top: 187px; height: 307px; margin-bottom: 260px; }
.center { width: 1291px; display: flex; flex-direction: column; border-left: 1px solid #cdcdcd; margin-left: 3px; }
.canvas { display: flex; flex: none; height: 685px; border-bottom: 1px solid #c8c8c8; }
.slide { display: flex; width: 1160px; height: 652px; margin: 15px 0 0 59px; background: #fff; box-shadow: 0 0 0 1px #d5d5d5; }
.sright { margin-left: 58px; width: 12px; padding-top: 2px; background: #f0f0f0; }
.sright .grip { margin-top: 306px; height: 39px; margin-bottom: 267px; }
.sright svg { margin-top: 1px; }

.strip { width: 96px; background: #fde5d6; padding-top: 304px; font-size: 13.200px; text-align: center; color: #3f2f28; }
.strip li { height: 20px; line-height: 19px; margin-bottom: 9.300px; white-space: nowrap; }
.strip li.two { height: 33px; line-height: 16px; margin: 13.500px 0 10.300px; }
.strip .hl { height: 26px; line-height: 28px; background: #ff0; margin: 0 0 14.500px 2px; }
.strip li:nth-child(6) { margin-bottom: 12px; }
.strip li:nth-child(7) { margin-bottom: 16px; }
.strip li:nth-child(8) { margin-bottom: 19px; }
.strip li:nth-child(9) { margin-bottom: 14px; }
.content { width: 1064px; padding-left: 1px; }
.head { display: flex; justify-content: space-between; height: 74px; }
.head h1 { margin: 20px 0 0 50px; font-size: 28.700px; line-height: 44px; font-weight: 350; color: #222; }
.brand { display: flex; margin: 15px 29px 0 0; width: 299px; color: #00915f; }
.brand div { margin-left: 10px; }
.cal { font-family: "Noto Sans CJK TC", sans-serif; font-size: 24.800px; line-height: 33px; height: 33px; font-style: italic; font-weight: 500; white-space: nowrap; }
.eng { font-family: "Liberation Sans", sans-serif; font-size: 12px; letter-spacing: -.38px; line-height: 14px; white-space: nowrap; }
.bar { width: 1036px; height: 14px; border-top: 1.500px solid #808080; }
.bar i { display: block; width: 165px; height: 13px; background: #808080; border-radius: 0 6px 6px 0; }
.text { display: flex; margin: 30px 0 0 50px; }
.text > svg { margin: 6px 0 0; }
.lines { margin-left: 11px; font-size: 21.500px; color: #333; }
.lines p { display: flex; height: 26.500px; line-height: 28px; white-space: nowrap; }
.lines .p2 { letter-spacing: .35px; }
.lines .n1 { width: 23px; }
.lines a { color: #2a6ac4; width: 395px; letter-spacing: -.74px; border-bottom: 1px solid #5b86c8; height: 27px; }
.lines .dot { width: 11px; text-align: center; }
.lines .par { width: 23px; }
.lines .gbd { width: 49px; letter-spacing: -.8px; }
.lines .reg { width: 75px; letter-spacing: -.9px; }

.shot { position: relative; width: 659px; height: 429px; margin: 19px 0 0 159px; background: #8b8b8b; font-family: "DejaVu Sans", sans-serif; font-size: 7.300px; color: #444; }
.shot-top { display: flex; align-items: center; height: 24px; padding-left: 1px; color: #333; white-space: nowrap; }
.ihme { margin-left: 5px; width: 38px; font-family: "Open Sans", sans-serif; font-size: 13px; border-right: 1px solid #777; line-height: 12px; }
.ghdx { margin-left: 6px; width: 228px; font-family: "Open Sans", sans-serif; font-size: 13.800px; font-weight: 500; }
.gr { width: 275px; font-size: 12.300px; letter-spacing: -.15px; }
.viz { width: 57px; font-size: 8.300px; letter-spacing: -.05px; }
.caret { border: 2.500px solid transparent; border-top: 3px solid #333; border-bottom: 0; margin-left: 2px; }
.help { margin-left: 10px; display: flex; flex-direction: column; align-items: center; line-height: 8px; font-size: 6.500px; }
.help b { font-size: 10px; line-height: 10px; }
.shot-sub { display: flex; align-items: center; height: 32px; font-size: 13.300px; letter-spacing: 1.400px; color: #3d3d3d; background: linear-gradient(90deg, transparent 217px, #868686 222px, #868686 230px, transparent 238px); }
.s1 { margin-left: 23px; width: 183px; }
.ham { width: 68px; font-size: 10px; }
.shot-main { display: flex; }
.form { width: 215px; padding-left: 5px; white-space: nowrap; }
.form p, .form b { display: block; height: 12px; line-height: 12px; }
.form .it { font-style: italic; color: #5a5a5a; font-size: 7.500px; overflow: hidden; }
.form .w3 { font-style: normal; }
.form b { font-size: 7px; margin-top: 6.100px; color: #333; }
.form b.f0 { margin-top: 5px; }
.form b.tight { margin-top: 7.500px; height: 13px; }
.form b.yr { margin-top: 0; }
.form .v { height: 13.600px; line-height: 15.500px; padding-left: 7px; color: #4a4a4a; display: flex; gap: 12px; }
.form u { display: inline-block; width: 5px; height: 5px; border: 1px solid #666; border-radius: 50%; }
.sbtn { margin-top: 9px; width: 210px; height: 18px; line-height: 18px; text-align: center; background: #1f5020; color: #8aa08a; border-radius: 1px; }
.results { margin-left: 273px; width: 166px; }
.sg { margin: -1px 0 0 115px; width: 47px; height: 18px; line-height: 18px; text-align: center; background: #1f5020; color: #8aa08a; border-radius: 1px; }
.ury { height: 38px; line-height: 40px; font-size: 8px; margin-left: 1px; }
.tbl { width: 162px; border-right: 6px solid #858585; }
.tr { display: flex; height: 19.500px; line-height: 19px; padding-left: 1px; font-size: 6.800px; border-bottom: 1px solid #868686; white-space: nowrap; }
.tr.th { height: 17px; line-height: 16px; font-weight: 700; background: #888; color: #333; }
.tr span { width: 42px; } .tr span:first-child { width: 27px; } .tr span:nth-child(3) { width: 46px; } .tr .r { width: 38px; text-align: right; }
.hs { height: 8px; background: #868686; padding: 1px 0; margin-top: 1px; } .hs i { display: block; width: 55px; height: 6px; background: #6c6c6c; }
.pg { display: flex; align-items: center; gap: 20px; margin: 8px 0 0 76px; }
.one { width: 13px; height: 14px; line-height: 12px; border: 1px solid #555; border-radius: 1px; text-align: center; }
.modal { position: absolute; left: 173px; top: 56px; width: 316px; height: 363px; background: #fff; color: #666; box-shadow: 0 2px 6px rgba(0,0,0,.3); white-space: nowrap; }
.mh { display: flex; justify-content: space-between; align-items: center; height: 30px; padding: 0 13px 0 14px; background: #f8f8f8; font-size: 8.600px; color: #444; }
.mb { padding: 14px 14px 0 13.500px; line-height: 12.150px; font-size: 7.680px; }
.mb > p, .mb ul { margin-bottom: 7.800px; }
.mb ul { font-style: italic; padding-left: 22px; list-style: disc; font-size: 7.800px; }
.mb ul:last-of-type { margin-bottom: 7px; }
.mb b { color: #444; font-size: 7.600px; } .mb b.g { color: #3b7a44; }
.rbtn { height: 18px; line-height: 18px; text-align: center; background: #367a38; color: #d8ecd8; border-radius: 1px; }
.mb .acc { text-align: center; margin: 14px 0 3px; }
.ibtn { height: 18px; line-height: 17px; text-align: center; border: 1px solid #ccc; border-radius: 2px; }
.cursor { position: absolute; left: 93px; top: 93px; }

.notes { position: relative; padding: 4px 0 0 8px; font-size: 11.700px; line-height: 17px; color: #555; }
.ime { position: absolute; left: 1205px; top: 4px; width: 72px; height: 28px; background: linear-gradient(#edd2a4, #f0d9b2 50%, #e8c999); border-radius: 3px; box-shadow: 0 1px 3px #bbb; display: flex; align-items: center; gap: 11px; padding-left: 14px; color: #6b4a1e; font-size: 13px; }
.knot { position: absolute; left: 61px; top: 10px; }

.status { display: flex; align-items: center; flex: none; height: 18px; background: #f2f2f2; border-top: 1px solid #d5d5d5; font-size: 9.900px; color: #444; white-space: nowrap; }
.st1 { margin-left: 6px; width: 124px; } .book { margin-right: 13px; } .st2 { width: 105px; font-size: 9.600px; } .acc-i { margin-right: 3px; } .st3 { font-size: 9.700px; } .grow { flex: 1; }
.s4 { margin: 0 16px 0 4px; } .s5 { margin: 0 14px 0 2px; }
.views { display: flex; align-self: stretch; } .views span { width: 31.700px; display: flex; align-items: center; justify-content: center; } .views .von { background: #cbcbcb; }
.zoomer { margin-left: 6px; } .pct { width: 35px; margin-left: 6px; } .pct + svg { margin-right: 6px; }

.taskbar { display: flex; height: 30px; flex: none; background: linear-gradient(90deg, #cfe2e8, #d3e2ec 50%, #d6dce8); }
.start { width: 39px; display: flex; align-items: center; justify-content: center; background: #c3dfe6; }
.search { display: flex; align-items: center; width: 228px; padding-left: 8px; background: #fff; border: 1px solid #d5dde0; color: #333; font-size: 11.500px; }
.search span { margin-left: 9px; width: 134px; }
.shrimp { margin-left: 1px; }
.apps { display: flex; margin-left: 3px; }
.apps span { width: 39px; display: flex; align-items: center; justify-content: center; background: linear-gradient(#2a7bbb, #2a7bbb) center bottom / 31px 2px no-repeat; }
.apps .pp { background: linear-gradient(#1f6fb5, #1f6fb5) center bottom / 38px 2px no-repeat #f0f4f6; }
.tray { display: flex; align-items: center; margin-left: auto; padding-right: 13px; }
.sogou { margin-left: -2px; }
.clock { display: flex; flex-direction: column; align-items: center; width: 60px; margin: 0 8px 0 6px; font-size: 9.900px; line-height: 15px; }
```
